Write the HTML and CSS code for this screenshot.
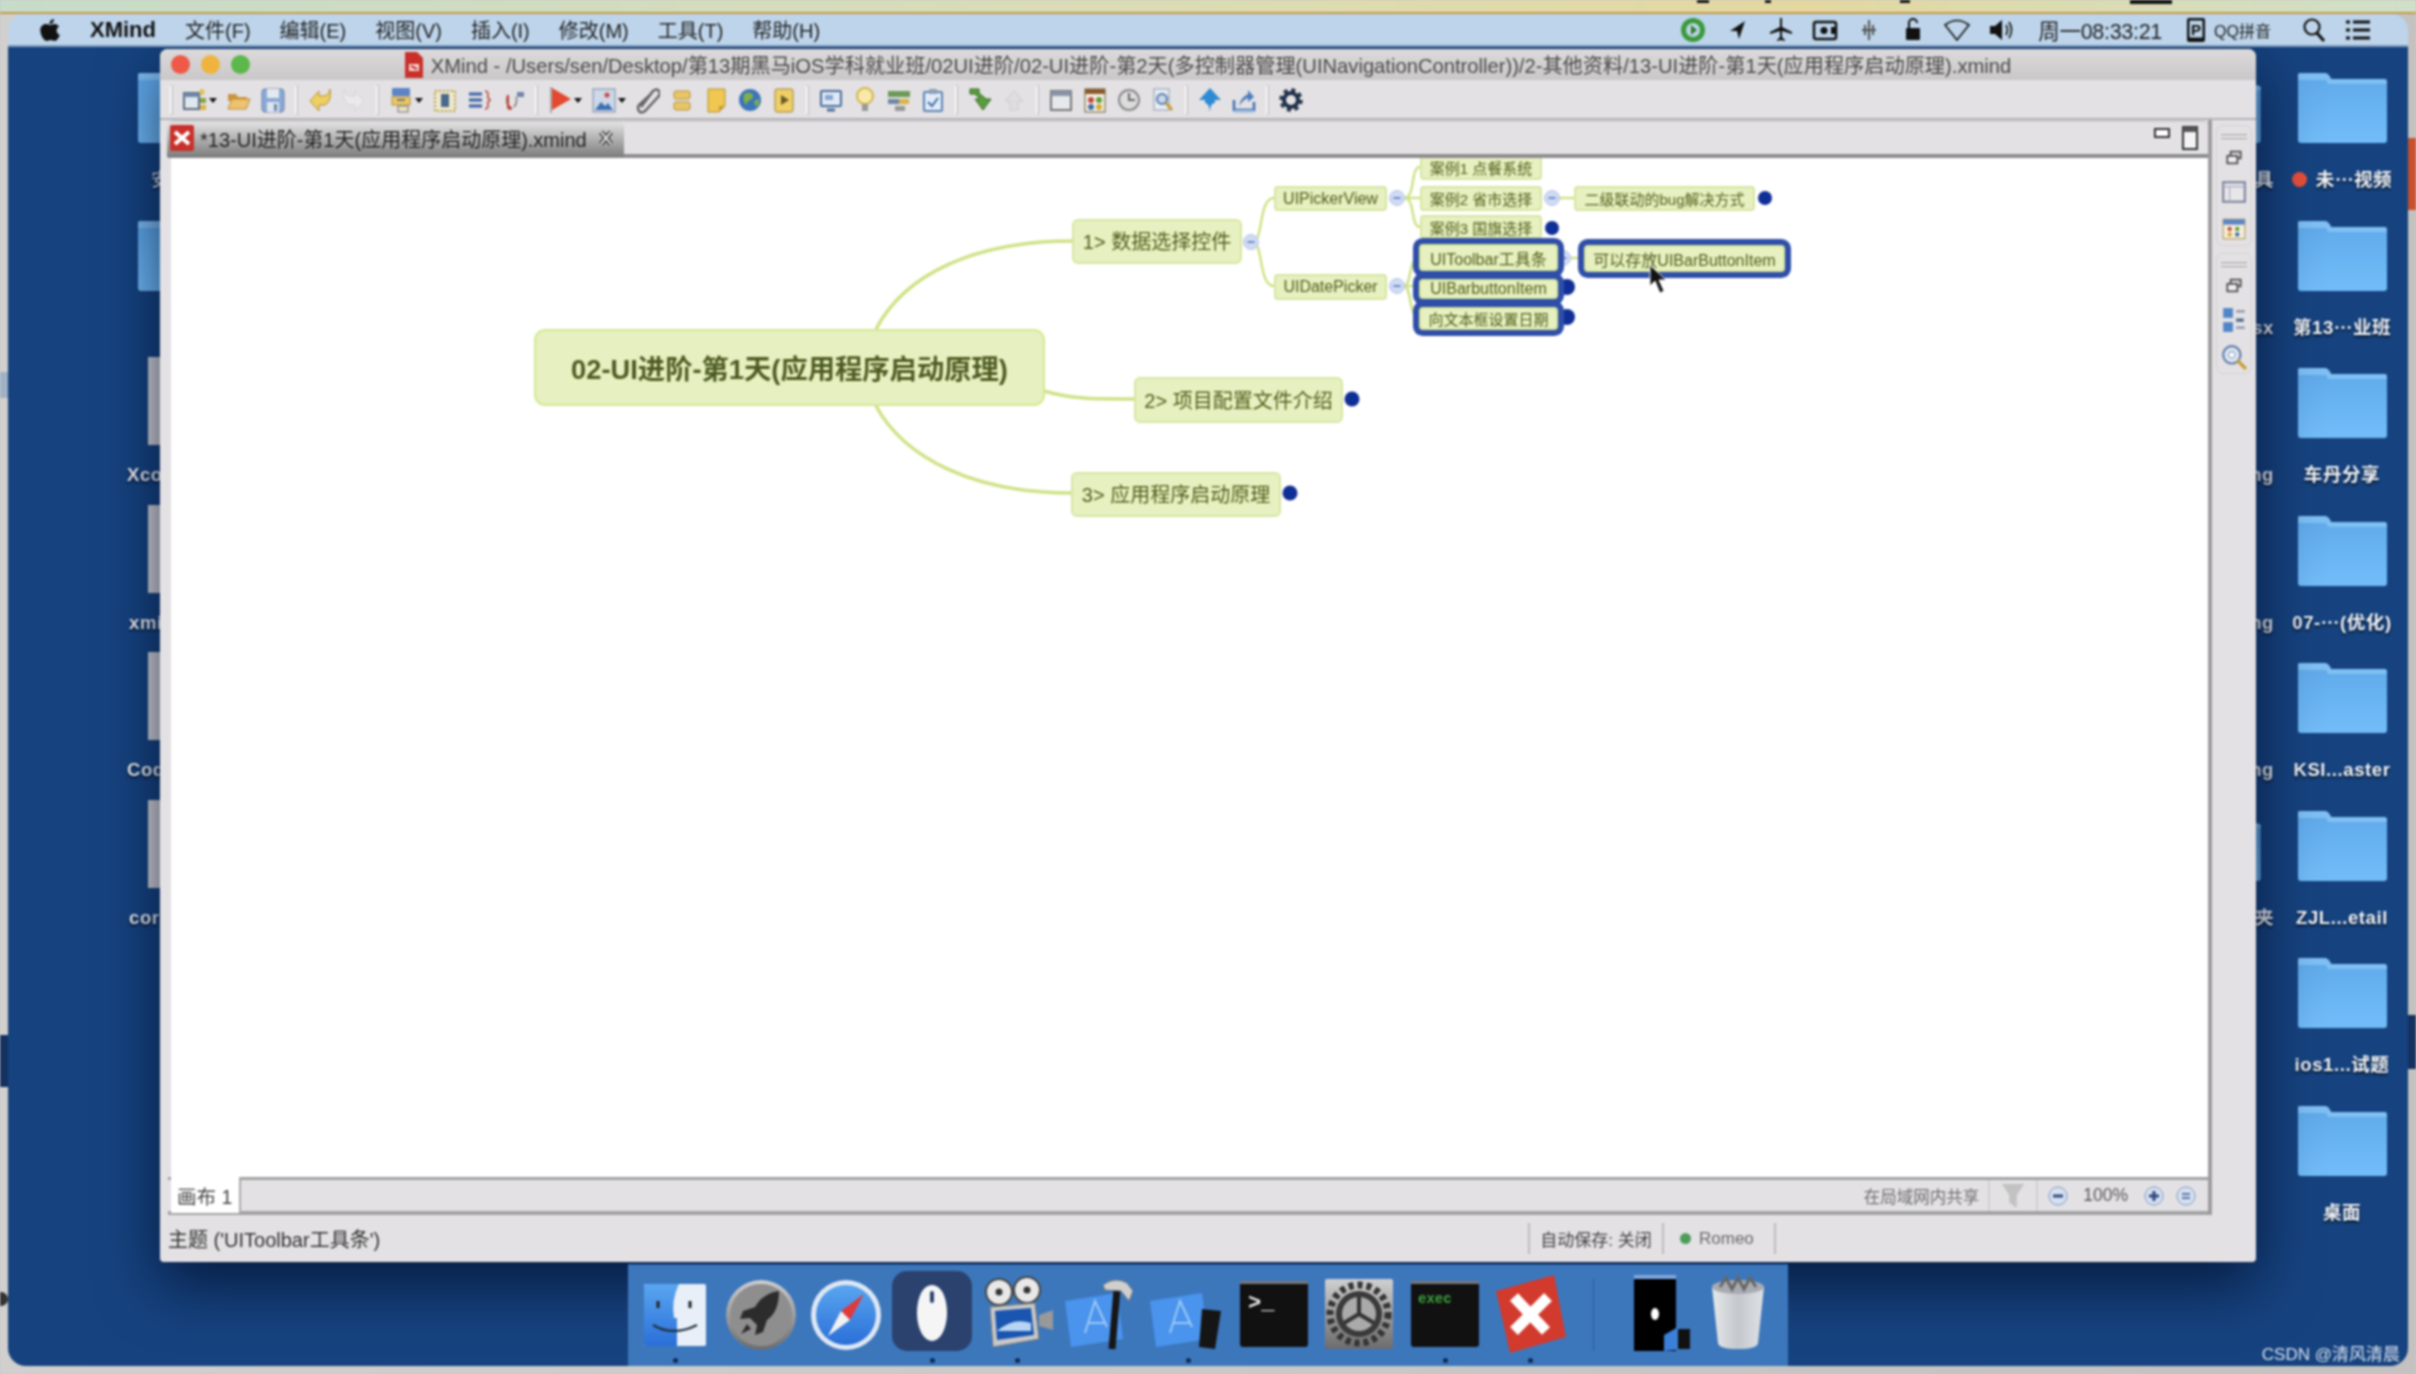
FILE: index.html
```html
<!DOCTYPE html>
<html lang="zh">
<head>
<meta charset="utf-8">
<title>XMind</title>
<link rel="stylesheet" href="styles.css">
</head>
<body>
<svg class="defs" width="0" height="0" aria-hidden="true">
  <defs>
    <linearGradient id="fg" x1="0" y1="0" x2="0" y2="1"><stop offset="0" stop-color="#5fa9ea"/><stop offset="1" stop-color="#72bdf9"/></linearGradient>
    <linearGradient id="blue" x1="0" y1="0" x2="0" y2="1"><stop offset="0" stop-color="#5aa6f0"/><stop offset="1" stop-color="#2a6fd8"/></linearGradient>
    <linearGradient id="grey" x1="0" y1="0" x2="0" y2="1"><stop offset="0" stop-color="#d0d0d0"/><stop offset="1" stop-color="#6c6c6c"/></linearGradient>
    <linearGradient id="can" x1="0" y1="0" x2="1" y2="0"><stop offset="0" stop-color="#e6e8ea"/><stop offset=".5" stop-color="#c4c8cc"/><stop offset="1" stop-color="#dfe2e5"/></linearGradient>
    <symbol id="folder" viewBox="0 0 89 70">
      <path d="M2 0h24q4 0 6 4l1 2h53q3 0 3 3v58q0 3-3 3H3q-3 0-3-3V2q0-2 2-2z" fill="url(#fg)"/>
      <path d="M2 0h24q4 0 6 4l1 2h53q3 0 3 3v2H30l-2-4H0V2q0-2 2-2z" fill="#7fc0f4"/>
    </symbol>
    <symbol id="minus" viewBox="0 0 16 16"><circle cx="8" cy="8" r="7.5" fill="#cfdaf3" stroke="#b5c6ea"/><rect x="4.5" y="7" width="7" height="2" fill="#6f8cc8"/></symbol>
  </defs>
</svg>
<div class="screen">
  <div class="strip"><span class="strip-mark m1"></span><span class="strip-mark m2"></span><span class="strip-mark m3"></span><span class="strip-mark m4"></span></div>
  <span class="edge e1"></span><span class="edge e2"></span><span class="edge e3"></span><span class="edge e4"></span><span class="edge e5"></span>
  <div class="mac">
    <header class="menubar">
      <svg class="apple" viewBox="0 0 20 24"><path d="M14 1c0 3-2 5-4.500 5C9.300 3.500 11.500 1.300 14 1zM10 7c1.500 0 2.500-1 4.500-1 2 0 3.500 1 4.500 2.500-3.500 2-3 7 .8 8.500-1 2.700-3 6-5 6-1.500 0-2.300-1-4-1s-2.700 1-4 1c-3 0-6.500-6-6.500-11C.300 8.500 3 6 6 6c1.700 0 3 1 4 1z" fill="#111"/></svg>
      <strong class="app">XMind</strong>
      <nav class="menus">
        <span>文件(F)</span><span>编辑(E)</span><span>视图(V)</span><span>插入(I)</span><span>修改(M)</span><span>工具(T)</span><span>帮助(H)</span>
      </nav>
      <div class="tray">
        <svg class="ti" viewBox="0 0 28 28"><circle cx="14" cy="14" r="12" fill="#3a9a3a"/><circle cx="14" cy="14" r="7" fill="#bcd3e8"/><path d="M12 9l6 5-6 5z" fill="#2d7f2d"/></svg>
        <svg class="ti" viewBox="0 0 28 28"><path d="M22 5L7 15h7l2 8z" fill="#111"/></svg>
        <svg class="ti" viewBox="0 0 28 28"><path d="M13 2h2v9l10 5v2l-10-3v6l3 3v1l-4-1-4 1v-1l3-3v-6L3 18v-2l10-5z" fill="#111"/></svg>
        <svg class="ti" viewBox="0 0 28 28"><rect x="3" y="6" width="22" height="17" rx="2" fill="none" stroke="#111" stroke-width="2.500"/><circle cx="13" cy="14.500" r="3.500" fill="#111"/><path d="M20 11h5v7h-5z" fill="#111"/></svg>
        <svg class="ti" viewBox="0 0 28 28"><path d="M14 4v20M7 14h14M10 9v10M18 9v10" stroke="#555" stroke-width="2"/></svg>
        <svg class="ti" viewBox="0 0 28 28"><rect x="7" y="12" width="14" height="12" rx="1" fill="#111"/><path d="M10 12V7a4 4 0 0 1 8 0" fill="none" stroke="#111" stroke-width="2"/></svg>
        <svg class="ti" viewBox="0 0 28 28"><path d="M14 24L2 9q12-9 24 0z" fill="none" stroke="#111" stroke-width="1.600"/></svg>
        <svg class="ti" viewBox="0 0 28 28"><path d="M3 10h5l7-6v20l-7-6H3z" fill="#111"/><path d="M19 9q3 5 0 10M22 6q5 8 0 16" fill="none" stroke="#111" stroke-width="1.600"/></svg>
        <time class="clock">周一08:33:21</time>
        <svg class="ti ti-p" viewBox="0 0 28 28"><rect x="5" y="2" width="18" height="24" rx="2" fill="#111"/><rect x="7.500" y="4.500" width="13" height="17" fill="#bcd3e8"/><text x="14" y="19" text-anchor="middle" class="ptext">P</text></svg>
        <span class="ime">QQ拼音</span>
        <svg class="ti ti-s" viewBox="0 0 28 28"><circle cx="12" cy="11" r="7.500" fill="none" stroke="#111" stroke-width="2.200"/><path d="M17 17l7 8" stroke="#111" stroke-width="3"/></svg>
        <svg class="ti" viewBox="0 0 28 28"><path d="M9 6h17M9 14h17M9 22h17M2 6h4M2 14h4M2 22h4" stroke="#111" stroke-width="3"/></svg>
      </div>
    </header>

    <main class="desktop">
      <section class="col col-hidden">
        <div class="item"><svg class="folder"><use href="#folder"/></svg><p class="lbl">工具</p></div>
        <div class="item"><div class="blank"></div><p class="lbl">.xlsx</p></div>
        <div class="item"><div class="blank"></div><p class="lbl">.png</p></div>
        <div class="item"><div class="blank"></div><p class="lbl">.png</p></div>
        <div class="item"><div class="blank"></div><p class="lbl">.png</p></div>
        <div class="item"><svg class="folder"><use href="#folder"/></svg><p class="lbl">文件夹</p></div>
      </section>
      <section class="col col-left">
        <div class="item"><svg class="folder"><use href="#folder"/></svg><p class="lbl lbl-a">安装包</p></div>
        <div class="item"><svg class="folder"><use href="#folder"/></svg><p class="lbl"></p></div>
        <div class="item"><div class="doc"></div><p class="lbl lbl-d">Xcode</p></div>
        <div class="item"><div class="doc"></div><p class="lbl lbl-e">xmind</p></div>
        <div class="item"><div class="doc"></div><p class="lbl lbl-d">Code</p></div>
        <div class="item"><div class="doc"></div><p class="lbl lbl-e">cor</p></div>
      </section>
      <section class="col col-right">
        <div class="item"><svg class="folder"><use href="#folder"/></svg><p class="lbl"><i class="tag"></i>未⋯视频</p></div>
        <div class="item"><svg class="folder"><use href="#folder"/></svg><p class="lbl">第13⋯业班</p></div>
        <div class="item"><svg class="folder"><use href="#folder"/></svg><p class="lbl">车丹分享</p></div>
        <div class="item"><svg class="folder"><use href="#folder"/></svg><p class="lbl">07-⋯(优化)</p></div>
        <div class="item"><svg class="folder"><use href="#folder"/></svg><p class="lbl">KSI...aster</p></div>
        <div class="item"><svg class="folder"><use href="#folder"/></svg><p class="lbl">ZJL...etail</p></div>
        <div class="item"><svg class="folder"><use href="#folder"/></svg><p class="lbl">ios1...试题</p></div>
        <div class="item"><svg class="folder"><use href="#folder"/></svg><p class="lbl">桌面</p></div>
      </section>

      <article class="window">
        <div class="titlebar">
          <span class="light red"></span><span class="light amber"></span><span class="light green"></span>
          <div class="wintitle">
            <svg class="docicon" viewBox="0 0 18 26"><path d="M0 0h12l6 6v20H0z" fill="#c9302c"/><path d="M4 12h10v7H4z" fill="#f5d8d0"/><path d="M6 14l6 3" stroke="#c9302c" stroke-width="2"/></svg>
            <span>XMind - /Users/sen/Desktop/第13期黑马iOS学科就业班/02UI进阶/02-UI进阶-第2天(多控制器管理(UINavigationController))/2-其他资料/13-UI进阶-第1天(应用程序启动原理).xmind</span>
          </div>
        </div>

        <div class="toolbar">
          <i class="sep"></i>
          <svg class="t" viewBox="0 0 24 28"><rect x="1" y="7" width="15" height="16" fill="#dfe6ee" stroke="#5c6c80" stroke-width="2"/><rect x="1" y="7" width="15" height="4" fill="#6d88a8"/><path d="M19 2l3 4-3 4-3-4z" fill="#e4c04a"/><rect x="17" y="12" width="6" height="5" fill="#8aa34a"/><rect x="17" y="19" width="6" height="5" fill="#d9b44a"/></svg><b class="arrow"></b>
          <svg class="t" viewBox="0 0 24 28"><path d="M1 8h8l2 3h9v4H1z" fill="#c9953f"/><path d="M1 23l4-10h18l-4 10z" fill="#eec36e" stroke="#c08a35"/></svg>
          <svg class="t" viewBox="0 0 24 28"><rect x="1" y="3" width="22" height="23" rx="3" fill="#8aa9d6" stroke="#667fa8"/><rect x="6" y="3" width="12" height="9" fill="#e4e9f0"/><rect x="6" y="16" width="12" height="10" fill="#dfe5ee"/><rect x="13" y="18" width="3" height="7" fill="#6a86b0"/></svg>
          <i class="sep"></i>
          <svg class="t" viewBox="0 0 24 28"><path d="M2 15L11 5v5h5q5-1 6-7 2 12-5 16h-6v6z" fill="#efcf62" stroke="#b8923a"/></svg>
          <svg class="t faded" viewBox="0 0 24 28"><path d="M22 15l-9-10v5H8q-5-1-6-7-2 12 5 16h6v6z" fill="#eeeeee" stroke="#cfcfcf"/></svg>
          <i class="sep"></i>
          <svg class="t" viewBox="0 0 24 28"><rect x="3" y="2" width="18" height="8" rx="1" fill="#5d84c4"/><rect x="3" y="11" width="18" height="8" fill="#ecc768" stroke="#b8923a"/><rect x="9" y="20" width="10" height="6" fill="#e8e2c0" stroke="#777"/><path d="M8 14h8" stroke="#777" stroke-width="2"/></svg><b class="arrow"></b>
          <svg class="t" viewBox="0 0 24 28"><rect x="2" y="5" width="20" height="20" fill="#eee9cc" stroke="#b79e45" stroke-width="2" stroke-dasharray="2 2"/><rect x="8" y="8" width="8" height="13" fill="#48688e"/></svg>
          <svg class="t" viewBox="0 0 24 28"><path d="M2 8h13M2 14h13M2 20h13" stroke="#3d62a8" stroke-width="3"/><path d="M18 5q3 0 3 4v3l2 2-2 2v3q0 4-3 4" fill="none" stroke="#b94a3c" stroke-width="1.600"/></svg>
          <svg class="t" viewBox="0 0 24 28"><path d="M7 9v12q0 3 4 1M7 9q-3 9 3 13" fill="none" stroke="#b8433a" stroke-width="2"/><path d="M13 21q4-5 2-10" fill="none" stroke="#777" stroke-width="1.500"/><rect x="16" y="6" width="7" height="5" fill="#6e86a8"/></svg>
          <i class="sep"></i>
          <svg class="t" viewBox="0 0 24 28"><path d="M3 1v26" stroke="#aaa" stroke-width="2"/><path d="M4 2l19 11L4 24z" fill="#e2492f"/></svg><b class="arrow"></b>
          <svg class="t" viewBox="0 0 24 28"><rect x="1" y="3" width="22" height="23" fill="#cdd8e8" stroke="#7b8ea8"/><path d="M3 24l6-8 4 4 3-3 5 7z" fill="#3e6fb2"/><circle cx="15" cy="9" r="2.500" fill="#cc4a44"/></svg><b class="arrow"></b>
          <svg class="t" viewBox="0 0 24 28"><path d="M5 21L17 5q4-3 6 0t-1 6L9 25q-4 3-6 0t0-6L15 8" fill="none" stroke="#666" stroke-width="2.500"/></svg>
          <svg class="t" viewBox="0 0 24 28"><rect x="4" y="5" width="16" height="8" rx="2" fill="#e8c668" stroke="#b8923a"/><rect x="4" y="16" width="16" height="8" rx="2" fill="#e8c668" stroke="#b8923a"/></svg>
          <svg class="t" viewBox="0 0 24 28"><path d="M4 3h17v17l-6 6H4z" fill="#efc751" stroke="#b8923a"/><path d="M15 26v-6h6z" fill="#c99c34"/></svg>
          <svg class="t" viewBox="0 0 24 28"><circle cx="12" cy="14" r="11" fill="#3c75b8"/><path d="M6 8q5-3 8 0t-2 6-3 6q-5-5-3-12zM16 15l5-2q1 5-3 8z" fill="#7fb04a"/></svg>
          <svg class="t" viewBox="0 0 24 28"><rect x="3" y="3" width="18" height="23" rx="2" fill="#efcf68" stroke="#a48432"/><path d="M9 9l8 5-8 5z" fill="#6b5a28"/></svg>
          <i class="sep"></i>
          <svg class="t" viewBox="0 0 24 28"><rect x="2" y="5" width="20" height="15" rx="1" fill="#dfe8f4" stroke="#4a6e9e" stroke-width="2"/><rect x="6" y="9" width="8" height="5" fill="#89a7cf"/><path d="M8 24h8" stroke="#4a6e9e" stroke-width="3"/></svg>
          <svg class="t" viewBox="0 0 24 28"><circle cx="12" cy="10" r="8" fill="#f8e9a8" stroke="#d4b34a" stroke-width="2"/><rect x="9" y="18" width="6" height="7" fill="#999"/></svg>
          <svg class="t" viewBox="0 0 24 28"><rect x="1" y="5" width="22" height="6" fill="#6e9a58"/><rect x="1" y="13" width="11" height="5" fill="#6d88a8"/><rect x="12" y="13" width="10" height="5" fill="#d9b44a"/><rect x="8" y="20" width="10" height="5" fill="#999"/></svg>
          <svg class="t" viewBox="0 0 24 28"><rect x="3" y="6" width="18" height="19" rx="1" fill="#e2ebf6" stroke="#5a82b8" stroke-width="2"/><rect x="8" y="3" width="8" height="5" fill="#8ca0b8"/><path d="M7 16l4 4 6-8" fill="none" stroke="#3d6ba8" stroke-width="2"/></svg>
          <i class="sep"></i>
          <svg class="t" viewBox="0 0 24 28"><path d="M2 3h9v4l7 6h5l-8 11-8-11h5L7 8H2z" fill="#5d9c3c" stroke="#2e6b28"/></svg>
          <svg class="t faded" viewBox="0 0 24 28"><path d="M12 5l9 10h-5v9H8v-9H3z" fill="#dedede" stroke="#c4c4c4"/></svg>
          <i class="sep"></i>
          <svg class="t" viewBox="0 0 24 28"><rect x="2" y="5" width="20" height="19" fill="#e6e8ec" stroke="#777" stroke-width="2"/><rect x="2" y="5" width="20" height="5" fill="#8795a8"/></svg>
          <svg class="t" viewBox="0 0 24 28"><rect x="2" y="3" width="20" height="23" fill="#f2efe2" stroke="#6b5a3a"/><rect x="2" y="3" width="20" height="5" fill="#8a5a2a"/><circle cx="8" cy="14" r="3" fill="#c9453a"/><circle cx="16" cy="14" r="3" fill="#5d9c3c"/><circle cx="8" cy="21" r="3" fill="#3d6ba8"/><circle cx="16" cy="21" r="3" fill="#d9a83a"/></svg>
          <svg class="t" viewBox="0 0 24 28"><circle cx="12" cy="14" r="10" fill="#dcdcdc" stroke="#888" stroke-width="2"/><path d="M12 7v7h6" fill="none" stroke="#666" stroke-width="2"/></svg>
          <svg class="t" viewBox="0 0 24 28"><rect x="3" y="3" width="15" height="21" fill="#e8eef6" stroke="#8a9ab0"/><circle cx="11" cy="13" r="5" fill="#c8d8ec" stroke="#5a7aa8" stroke-width="2"/><path d="M15 17l6 7" stroke="#c99c34" stroke-width="3"/></svg>
          <i class="sep"></i>
          <svg class="t" viewBox="0 0 24 28"><path d="M12 2l11 12h-6v3q-5 0-5 9-1-9-5-9v-3H1z" fill="#2f8ad4"/></svg>
          <svg class="t" viewBox="0 0 24 28"><path d="M2 14v10h20v-8" fill="none" stroke="#3e6fb2" stroke-width="2.500"/><rect x="2" y="24" width="20" height="3" fill="#a9c2e2"/><path d="M7 20q2-9 9-12V4l6 7-6 5v-4q-4 1-9 8z" fill="#4a7ec0"/></svg>
          <i class="sep"></i>
          <svg class="t" viewBox="0 0 24 28"><circle cx="12" cy="14" r="7" fill="none" stroke="#1f3048" stroke-width="4"/><circle cx="12" cy="14" r="10" fill="none" stroke="#1f3048" stroke-width="3.500" stroke-dasharray="4 3.850"/></svg>
        </div>

        <div class="workspace">
          <section class="editor">
            <div class="tabstrip">
              <div class="tab">
                <svg class="tabicon" viewBox="0 0 24 26"><rect width="24" height="26" rx="2" fill="#c9302c"/><path d="M5 7l14 12M19 7L5 19" stroke="#fff" stroke-width="4"/></svg>
                <span class="tabtext">*13-UI进阶-第1天(应用程序启动原理).xmind</span>
                <svg class="tabclose" viewBox="0 0 14 16"><path d="M2 2l10 12M12 2L2 14" stroke="#333" stroke-width="5"/><path d="M2 2l10 12M12 2L2 14" stroke="#e4e4e4" stroke-width="2"/></svg>
              </div>
              <div class="winbtns">
                <svg class="wb" viewBox="0 0 16 12"><rect x="1" y="1" width="14" height="8" fill="#fff" stroke="#333" stroke-width="2"/></svg>
                <svg class="wb wb-max" viewBox="0 0 16 24"><rect x="1" y="1" width="14" height="22" fill="#f4f4f4" stroke="#333" stroke-width="2"/><rect x="1" y="1" width="14" height="5" fill="#555"/></svg>
              </div>
            </div>
            <div class="canvas">
              <svg class="links" viewBox="171 159 2037 1018">
                <g class="wire">
                  <path d="M876 330C905 275 975 242 1072 242"/>
                  <path d="M876 407C905 460 975 494 1071 494"/>
                  <path d="M1044 392C1075 401 1100 400 1134 400"/>
                </g>
                <g class="wire thin">
                  <path d="M1252 243C1264 243 1258 199 1274 199"/>
                  <path d="M1252 243C1264 243 1258 287 1274 287"/>
                  <path d="M1397 199H1420"/>
                  <path d="M1404 199C1416 199 1410 168 1420 168"/>
                  <path d="M1404 199C1416 199 1410 228 1420 228"/>
                  <path d="M1552 199H1574"/>
                  <path d="M1397 287H1419"/>
                  <path d="M1404 287C1412 287 1408 259 1419 259"/>
                  <path d="M1404 287C1412 287 1408 318 1419 318"/>
                  <path d="M1562 259H1584"/>
                </g>
                <use href="#minus" x="1243" y="235" width="16" height="16"/>
                <use href="#minus" x="1389" y="191" width="16" height="16"/>
                <use href="#minus" x="1389" y="279" width="16" height="16"/>
                <use href="#minus" x="1544" y="191" width="16" height="16"/>
                <use href="#minus" x="1555" y="251" width="16" height="16"/>
                <g class="dots">
                  <circle cx="1765" cy="199" r="7"/>
                  <circle cx="1552" cy="229" r="7"/>
                  <circle cx="1567" cy="288" r="8"/>
                  <circle cx="1567" cy="318" r="8"/>
                  <circle cx="1352" cy="400" r="7.500"/>
                  <circle cx="1290" cy="494" r="7.500"/>
                </g>
              </svg>
              <div class="node big root">02-UI进阶-第1天(应用程序启动原理)</div>
              <div class="node mid n1">1&gt; 数据选择控件</div>
              <div class="node mid n2">2&gt; 项目配置文件介绍</div>
              <div class="node mid n3">3&gt; 应用程序启动原理</div>
              <div class="node small picker">UIPickerView</div>
              <div class="node small date">UIDatePicker</div>
              <div class="node small case1">案例1 点餐系统</div>
              <div class="node small case2">案例2 省市选择</div>
              <div class="node small case3">案例3 国旗选择</div>
              <div class="node small bug">二级联动的bug解决方式</div>
              <div class="node small sel tb">UIToolbar工具条</div>
              <div class="node small sel txt">向文本框设置日期</div>
              <div class="node small sel bb">UIBarbuttonItem</div>
              <div class="node small sel store">可以存放UIBarButtonItem</div>
              <svg class="cursor" viewBox="0 0 18 30"><path d="M1 1v21l5-5 5 12 4-2-5-11h7z" fill="#111" stroke="#eee"/></svg>
            </div>
            <div class="sheetbar">
              <div class="sheettab">画布 1</div>
              <div class="sheetright">
                <span class="share">在局域网内共享</span>
                <i class="vline"></i>
                <svg class="funnel" viewBox="0 0 24 28"><path d="M0 1h24l-8 12v14l-8-6v-8z" fill="#c2c2c2"/></svg>
                <i class="vline"></i>
                <svg class="zm" viewBox="0 0 20 20"><circle cx="10" cy="10" r="9" fill="#d6e0f0" stroke="#7f9ac8"/><rect x="5" y="8.500" width="10" height="3" fill="#2f4a80"/></svg>
                <span class="pct">100%</span>
                <svg class="zm" viewBox="0 0 20 20"><circle cx="10" cy="10" r="9" fill="#d6e0f0" stroke="#7f9ac8"/><path d="M5 10h10M10 5v10" stroke="#2f4a80" stroke-width="3"/></svg>
                <svg class="zm" viewBox="0 0 20 20"><circle cx="10" cy="10" r="9" fill="#d6e0f0" stroke="#7f9ac8"/><path d="M6 8h8M6 12h8" stroke="#5a74a8" stroke-width="2"/></svg>
              </div>
            </div>
          </section>
          <aside class="trim">
            <div class="trimgroup">
              <i class="handle"></i>
              <svg class="tr tr-sm" viewBox="0 0 20 18"><rect x="6" y="2" width="12" height="8" fill="none" stroke="#444" stroke-width="2"/><rect x="2" y="7" width="12" height="9" fill="#eee" stroke="#444" stroke-width="2"/></svg>
              <svg class="tr" viewBox="0 0 24 24"><rect x="2" y="3" width="20" height="18" fill="#e8e6e8" stroke="#7d86a0" stroke-width="2"/><path d="M2 7h20M8 7v14" stroke="#a5abc0"/></svg>
              <svg class="tr" viewBox="0 0 24 24"><rect x="2" y="3" width="20" height="18" fill="#f4efdc" stroke="#b59a5a"/><rect x="2" y="3" width="20" height="5" fill="#5d84c4"/><circle cx="8" cy="12" r="2" fill="#c9453a"/><circle cx="15" cy="12" r="2" fill="#5d9c3c"/><circle cx="8" cy="17" r="2" fill="#d9a83a"/><circle cx="15" cy="17" r="2" fill="#3d6ba8"/></svg>
            </div>
            <div class="trimgroup">
              <i class="handle"></i>
              <svg class="tr tr-sm" viewBox="0 0 20 18"><rect x="6" y="2" width="12" height="8" fill="none" stroke="#444" stroke-width="2"/><rect x="2" y="7" width="12" height="9" fill="#eee" stroke="#444" stroke-width="2"/></svg>
              <svg class="tr" viewBox="0 0 24 24"><rect x="2" y="1" width="9" height="9" fill="#4f86c8"/><rect x="2" y="14" width="9" height="9" fill="#4f86c8"/><path d="M14 4h8M14 19h8" stroke="#8a93a8" stroke-width="2"/><path d="M14 12h7" stroke="#48688e" stroke-width="3"/></svg>
              <svg class="tr" viewBox="0 0 24 24"><circle cx="10" cy="10" r="8" fill="#dfe6f0" stroke="#5f7aa8" stroke-width="2"/><circle cx="10" cy="10" r="3" fill="#fff" stroke="#8aa0c8"/><path d="M15 15l8 8" stroke="#c99c34" stroke-width="3"/></svg>
            </div>
          </aside>
        </div>

        <footer class="statusbar">
          <span class="topic">主题 ('UIToolbar工具条')</span>
          <div class="status-right">
            <i class="vline dark"></i>
            <span class="auto">自动保存: 关闭</span>
            <i class="vline dark"></i>
            <span class="user"><i class="online"></i>Romeo</span>
            <i class="vline dark"></i>
          </div>
        </footer>
      </article>

      <nav class="dock">
        <div class="dk on"><svg viewBox="0 0 72 72"><rect x="5" y="5" width="62" height="62" rx="2" fill="#e8eff8"/><path d="M7 5h33q-8 16-5 34h3v28H7q-2 0-2-2V7q0-2 2-2z" fill="url(#blue)"/><path d="M19 22v7M51 22v7" stroke="#222" stroke-width="3"/><path d="M14 46q20 12 44 0" fill="none" stroke="#234" stroke-width="2.500"/></svg></div>
        <div class="dk"><svg viewBox="0 0 72 72"><circle cx="36" cy="36" r="35" fill="url(#grey)"/><circle cx="36" cy="36" r="31" fill="#8e8e8e"/><path d="M54 12q-16 2-24 16L18 32l-3 8 10-1 7 7-2 10 8-3 4-12q12-8 12-29z" fill="#2c2c2c"/><path d="M22 45l-6 10 10-5z" fill="#2c2c2c"/></svg></div>
        <div class="dk"><svg viewBox="0 0 72 72"><circle cx="36" cy="36" r="35" fill="#dfe8f4"/><circle cx="36" cy="36" r="30" fill="url(#blue)"/><path d="M54 15L31 32l9 9z" fill="#e0393a"/><path d="M18 57l13-25 9 9z" fill="#f2f2f2"/></svg></div>
        <div class="dk on"><svg viewBox="0 0 72 72"><rect x="-4" y="-8" width="80" height="80" rx="15" fill="#2b426e"/><path d="M36 6c10 0 15 14 15 28s-6 28-15 28-15-14-15-28 5-28 15-28z" fill="#f5f5f5"/><rect x="34" y="12" width="4" height="12" rx="2" fill="#2b426e"/></svg></div>
        <div class="dk on"><svg viewBox="0 0 72 72"><circle cx="18" cy="13" r="13" fill="#e8e8e8" stroke="#444" stroke-width="2"/><circle cx="46" cy="11" r="13" fill="#e8e8e8" stroke="#444" stroke-width="2"/><circle cx="18" cy="13" r="3.500" fill="#333"/><circle cx="46" cy="11" r="3.500" fill="#333"/><path d="M9 28l45-4 4 36-46 8z" fill="#c8c8c8" stroke="#777"/><path d="M14 32l36-3 3 27-37 5z" fill="#1a55b0"/><path d="M16 52q16-14 34-8v8z" fill="#b8d4f4"/><path d="M58 36l14-5v20l-14-4z" fill="#999"/></svg></div>
        <div class="dk"><svg viewBox="0 0 72 72"><path d="M-2 22l52-8 6 46-52 8z" fill="#4a94ee"/><path d="M18 54l10-32 12 26M21 44h18" fill="none" stroke="#9cc8f6" stroke-width="2"/><path d="M50 10l-5 60" stroke="#161616" stroke-width="7"/><path d="M36 6q12-9 24-2l6 8-4 10-8-10-16-1z" fill="#cfcfcf" stroke="#777"/></svg></div>
        <div class="dk on"><svg viewBox="0 0 72 72"><path d="M-2 22l52-8 6 46-52 8z" fill="#4a94ee"/><path d="M18 54l10-32 12 26M21 44h18" fill="none" stroke="#9cc8f6" stroke-width="2"/><path d="M50 30l19 2-6 38-16-2z" fill="#151515"/></svg></div>
        <div class="dk"><svg viewBox="0 0 72 72"><rect x="2" y="2" width="68" height="66" rx="3" fill="#111"/><rect x="2" y="2" width="68" height="3" fill="#777"/><text x="10" y="30" class="term">&gt;_</text></svg></div>
        <div class="dk"><svg viewBox="0 0 72 72"><rect x="2" y="0" width="68" height="70" rx="2" fill="url(#grey)"/><circle cx="36" cy="35" r="23" fill="#3a3a3a"/><circle cx="36" cy="35" r="29" fill="none" stroke="#333" stroke-width="7" stroke-dasharray="5 4"/><circle cx="36" cy="35" r="17" fill="#aaa"/><path d="M36 35V18M36 35L21 44M36 35l15 9" stroke="#333" stroke-width="4"/></svg></div>
        <div class="dk on"><svg viewBox="0 0 72 72"><rect x="2" y="2" width="68" height="66" rx="3" fill="#111"/><rect x="2" y="2" width="68" height="3" fill="#777"/><text x="9" y="24" class="exec">exec</text></svg></div>
        <div class="dk on"><svg viewBox="0 0 72 72"><path d="M2 12L60 -4l12 62-56 16z" fill="#d23a2e"/><path d="M20 18l32 34M54 18L20 52" stroke="#fff" stroke-width="11"/></svg></div>
        <i class="dockline"></i>
        <div class="dk dk-doc"><svg viewBox="0 0 72 72"><rect x="0" y="-4" width="42" height="4" fill="#7da7e0"/><rect x="0" y="0" width="42" height="72" fill="#000"/><ellipse cx="21" cy="35" rx="4" ry="6" fill="#fff"/><path d="M30 56l14-8 6 2v20l-20 2z" fill="#3b7fd8"/><rect x="44" y="50" width="12" height="20" fill="#111"/></svg></div>
        <div class="dk dk-trash"><svg viewBox="0 0 72 72"><path d="M10 8h52l-6 56q-1 6-20 6t-20-6z" fill="url(#can)"/><ellipse cx="36" cy="8" rx="26" ry="7" fill="#a8acb2"/><path d="M18 8l6-9 6 11 6-11 6 11 6-11 6 9" fill="none" stroke="#666" stroke-width="3"/></svg></div>
      </nav>
      <span class="watermark">CSDN @清风清晨</span>
    </main>
  </div>
</div>
</body>
</html>
```

FILE: styles.css
```css
* { box-sizing: border-box; }
html, body { margin: 0; padding: 0; }
body { width: 2416px; height: 1374px; overflow: hidden; background: #c9c7c5; font-family: "Liberation Sans", "Noto Sans CJK SC", sans-serif; }
.defs { position: absolute; }
p { margin: 0; }
i, b { font-style: normal; display: block; }

.screen { position: relative; width: 2416px; height: 1374px; display: flex; flex-direction: column; overflow: hidden; filter: blur(0.9px); background: linear-gradient(90deg, #d2d0ce, #c4c2c0); }
.strip { position: relative; height: 14px; flex: none; background: linear-gradient(90deg, #c7dcc9 0%, #dcdcb4 50%, #e4d8a0 75%, #cfe0c8 100%); border-bottom: 2px solid #c39a4a; }
.strip-mark { position: absolute; top: 0; height: 3px; background: #111; }
.m1 { left: 1697px; width: 12px; }
.m2 { left: 1765px; width: 6px; }
.m3 { left: 1900px; width: 10px; }
.m4 { left: 2130px; width: 42px; height: 4px; }

.edge { position: absolute; }
.e1 { left: 0; top: 372px; width: 8px; height: 26px; background: #9fb2c6; }
.e2 { left: 0; top: 1035px; width: 8px; height: 52px; background: #14315f; }
.e3 { left: 0; top: 1292px; width: 8px; height: 14px; background: #333; border-radius: 0 8px 8px 0; }
.e4 { right: 0; top: 138px; width: 8px; height: 72px; background: #c9502e; }
.e5 { right: 0; top: 1015px; width: 8px; height: 54px; background: #14315f; }

.mac { margin: 0 8px; height: 1352px; display: flex; flex-direction: column; }
.menubar { height: 33px; flex: none; display: flex; align-items: center; padding-left: 32px; border-radius: 16px 16px 0 0; background: #bdd4ea; border-bottom: 2px solid #7e9cbc; font-size: 20px; color: #222; }
.apple { width: 20px; height: 24px; flex: none; }
.app { margin-left: 30px; font-size: 22px; color: #111; width: 66px; white-space: nowrap; }
.menus { display: flex; gap: 29px; margin-left: 29px; }
.tray { margin-left: auto; display: flex; align-items: center; gap: 16px; padding-right: 36px; }
.ti { width: 28px; height: 28px; flex: none; }
.clock { font-size: 21.500px; color: #222; margin-left: 7px; letter-spacing: -0.3px; white-space: nowrap; }
.ti-p { margin-left: 4px; }
.ptext { font: bold 15px "Liberation Sans", sans-serif; fill: #111; }
.ime { font-size: 16px; margin-left: -12px; width: 59px; white-space: nowrap; }
.ti-s { margin-left: 11px; }

.desktop { position: relative; flex: 1; background: #16437f; border-radius: 0 0 18px 18px; overflow: hidden; }
.col { position: absolute; top: 26px; width: 150px; display: flex; flex-direction: column; }
.col-right { left: 2259px; }
.col-left { left: 119px; }
.col-hidden { left: 2116px; }
.item { height: 147.5px; flex: none; }
.folder { display: block; width: 89px; height: 70px; }
.col-right .folder { margin-left: 31px; }
.col-left .folder { margin-left: 11px; }
.col-hidden .folder { margin-left: 52px; margin-top: 7px; height: 63px; }
.blank { height: 70px; }
.lbl { margin-top: 26px; height: 22px; line-height: 22px; font-size: 18.500px; font-weight: bold; letter-spacing: .6px; color: #f2f4f8; text-shadow: 0 2px 3px rgba(0,0,0,.7); white-space: nowrap; text-align: center; }
.col-hidden .lbl { text-align: right; }
.col-left .lbl { text-align: left; }
.lbl-a { padding-left: 24px; font-weight: normal; }
.lbl-d { margin-top: 19px; }
.lbl-e { margin-top: 19px; padding-left: 2px; }
.doc { margin-left: 21px; margin-top: -11px; width: 70px; height: 88px; background: linear-gradient(90deg, #d8d8da, #b8b8ba); }
.tag { display: inline-block; width: 15px; height: 15px; border-radius: 50%; background: #e8503a; margin-right: 9px; vertical-align: -1px; }

.window { position: absolute; left: 152px; top: 2px; width: 2096px; height: 1213px; display: flex; flex-direction: column; background: #e3e1e3; border-radius: 8px 8px 4px 4px; box-shadow: 0 22px 60px rgba(2, 12, 40, .75); }
.titlebar { position: relative; height: 31px; flex: none; display: flex; align-items: center; justify-content: center; border-radius: 8px 8px 0 0; background: linear-gradient(#dcdadb, #c9c7c8); }
.light { position: absolute; top: 6px; width: 19px; height: 19px; border-radius: 50%; }
.red { left: 11px; background: #ee5a47; }
.amber { left: 41px; background: #f0b43e; }
.green { left: 71px; background: #5cb84a; }
.wintitle { display: flex; align-items: center; gap: 8px; font-size: 20.200px; color: #4a4a4a; white-space: nowrap; }
.docicon { width: 18px; height: 26px; flex: none; }

.toolbar { height: 40px; flex: none; display: flex; align-items: center; gap: 10px; padding: 2px 0 0 10px; border-bottom: 2px solid #b4b2b4; }
.t { width: 24px; height: 28px; flex: none; }
.faded { opacity: .7; }
.sep { width: 3px; height: 30px; flex: none; border: 1px solid #bbb; border-left-color: #fff; border-radius: 2px; background: #eee; }
.arrow { width: 8px; height: 5px; margin-left: -8px; flex: none; border-style: solid; border-width: 5px 4px 0; border-color: #111 transparent transparent; }

.workspace { flex: 1; min-height: 0; display: flex; padding-left: 8px; }
.editor { width: 2044px; flex: none; display: flex; flex-direction: column; border-right: 4px solid #9c9c9e; }
.tabstrip { height: 38px; flex: none; display: flex; justify-content: space-between; border-top: 2px solid #cfcdcf; border-bottom: 4px solid #8d8d8f; border-radius: 6px 6px 0 0; }
.tab { width: 457px; margin-left: -1px; margin-bottom: -3px; display: flex; align-items: center; padding: 0 0 3px 3px; border-radius: 5px 5px 0 0; background: linear-gradient(#e2e2e2, #b4b4b4 45%, #7d7d7d); }
.tabicon { width: 24px; height: 26px; flex: none; }
.tabtext { margin-left: 6px; font-size: 20px; color: #222; white-space: nowrap; }
.tabclose { width: 14px; height: 16px; margin-left: 12px; flex: none; }
.winbtns { display: flex; align-items: center; gap: 12px; padding-right: 10px; }
.wb { width: 16px; height: 12px; margin-top: -8px; }
.wb-max { height: 24px; margin-top: 0; }

.canvas { position: relative; flex: 1; min-height: 0; overflow: hidden; background: #fff; margin-left: 3px; }
.links { position: absolute; left: 0; top: 0; width: 2037px; height: 1018px; }
.wire { fill: none; stroke: #cfe286; stroke-width: 3.5; }
.thin { stroke-width: 2.5; }
.dots { fill: #102f96; }
.node { position: absolute; display: flex; align-items: center; justify-content: center; white-space: nowrap; background: #e7f0c0; border: 2px solid #d6e6a2; color: #4f5e1c; }
.big { border-radius: 11px; font-size: 27.300px; font-weight: bold; color: #4c5b22; border-color: #d2ea92; padding-bottom: 2px; }
.mid { border-radius: 6px; font-size: 20px; padding-bottom: 2px; }
.small { border-radius: 4px; font-size: 15px; }
.sel { box-shadow: 0 0 0 6px #2f4ea8; }
.root { left: 363px; top: 171px; width: 511px; height: 77px; }
.n1 { left: 901px; top: 61px; width: 170px; height: 45px; }
.n2 { left: 963px; top: 219px; width: 209px; height: 46px; }
.n3 { left: 900px; top: 314px; width: 210px; height: 45px; }
.picker { left: 1103px; top: 28px; width: 113px; height: 25px; font-size: 16px; }
.date { left: 1103px; top: 116px; width: 113px; height: 26px; font-size: 16px; }
.case1 { left: 1249px; top: -4px; width: 122px; height: 26px; }
.case2 { left: 1249px; top: 28px; width: 122px; height: 25px; }
.case3 { left: 1249px; top: 57px; width: 122px; height: 24px; }
.bug { left: 1403px; top: 28px; width: 181px; height: 25px; }
.tb { left: 1248px; top: 86px; width: 139px; height: 27px; font-size: 16px; }
.bb { left: 1248px; top: 121px; width: 139px; height: 20px; font-size: 16px; }
.txt { left: 1248px; top: 149px; width: 139px; height: 23px; }
.store { left: 1413px; top: 87px; width: 201px; height: 27px; font-size: 16px; }
.cursor { position: absolute; left: 1478px; top: 106px; width: 18px; height: 30px; }

.sheetbar { height: 38px; flex: none; display: flex; align-items: stretch; border-top: 3px solid #a2a2a4; border-bottom: 4px solid #a2a2a4; }
.sheettab { width: 70px; margin-left: 3px; margin-top: -3px; margin-bottom: -2px; display: flex; align-items: center; padding-left: 6px; background: #fff; font-size: 19.500px; color: #444; border-right: 2px solid #aaa; }
.sheetright { flex: 1; display: flex; align-items: center; justify-content: flex-end; padding-right: 12px; }
.share { font-size: 16.500px; color: #707070; white-space: nowrap; margin-right: 9px; }
.vline { width: 2px; align-self: stretch; background: #d2d0d2; flex: none; }
.funnel { width: 24px; height: 26px; margin: 0 11px; }
.zm { width: 20px; height: 20px; flex: none; margin-left: 11px; }
.vline + .zm { margin-left: 10px; }
.pct { font-size: 17.500px; color: #5a5a5a; margin: 0 5px 0 15px; }
.zm + .zm { margin-left: 12px; }

.trim { flex: 1; display: flex; flex-direction: column; gap: 7px; padding: 5px 4px 0 4px; }
.trimgroup { width: 36px; height: 121px; display: flex; flex-direction: column; align-items: center; gap: 11px; padding-top: 8px; border: 1px solid #d4d2d4; border-radius: 7px; }
.handle { width: 26px; height: 5px; border-top: 2px solid #bbb; border-bottom: 1px solid #999; background: #eee; flex: none; }
.tr { width: 28px; height: 26px; flex: none; }
.tr-sm { width: 18px; height: 15px; margin-bottom: 3px; }

.statusbar { height: 47px; flex: none; display: flex; align-items: center; justify-content: space-between; padding-left: 8px; font-size: 20px; color: #333; }
.topic { white-space: nowrap; font-size: 20px; }
.status-right { align-self: stretch; display: flex; align-items: center; padding: 8px 480px 8px 0; font-size: 17px; color: #444; }
.vline.dark { background: #bdbbbd; }
.auto { width: 132px; text-align: center; white-space: nowrap; }
.user { width: 110px; display: flex; align-items: center; justify-content: flex-start; gap: 8px; padding-left: 16px; color: #6a6a6a; }
.online { width: 11px; height: 11px; border-radius: 50%; background: #4f9c5a; flex: none; }

.dock { position: absolute; left: 620px; bottom: 0; width: 1160px; height: 102px; display: flex; gap: 13.500px; padding: 14px 0 0 11px; background: #3c77bc; border-top: 1px solid #2a5c9c; }
.dk { position: relative; width: 72px; height: 72px; flex: none; }
.dk svg { display: block; width: 72px; height: 72px; overflow: visible; }
.dk.on::after { content: ""; position: absolute; left: 34px; top: 79px; width: 5px; height: 5px; border-radius: 50%; background: #0d2a55; }
.dockline { width: 1px; height: 72px; margin: 0 11px 0 13px; background: #2a5c9c; flex: none; }
.dk-doc { margin-left: 16px; }
.dk-trash { margin-left: -18px; }
.term { font: bold 22px "Liberation Mono", monospace; fill: #eee; }
.exec { font: bold 14px "Liberation Mono", monospace; fill: #3fa33f; }
.watermark { position: absolute; right: 8px; bottom: 1px; font-size: 17px; color: #d8e0ee; white-space: nowrap; }
```
